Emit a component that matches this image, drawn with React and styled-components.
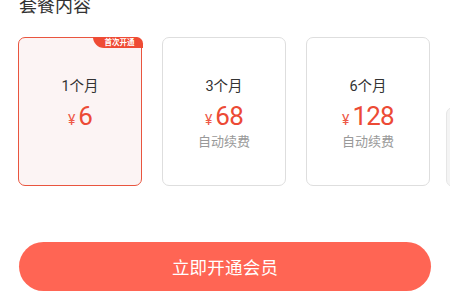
import React from 'react';
import styled, { createGlobalStyle } from 'styled-components';

const GlobalStyle = createGlobalStyle`
  html, body {
    margin: 0;
    padding: 0;
    background: #fff;
    font-family: Roboto, "Noto Sans CJK SC", sans-serif;
  }
`;

const Page = styled.div`
  width: 450px;
  height: 303px;
  overflow: hidden;
  display: flex;
  flex-direction: column;
  box-sizing: border-box;
`;

const Title = styled.h3`
  margin: -6px 0 0 19px;
  font-size: 18px;
  line-height: 24px;
  font-weight: 400;
  color: #333;
`;

const Plans = styled.div`
  display: flex;
  gap: 20px;
  margin-top: 19px;
  padding-left: 18px;
  overflow: hidden;
`;

const Card = styled.div`
  position: relative;
  flex: 0 0 124px;
  height: 149px;
  box-sizing: border-box;
  border-radius: 7px;
  border: ${p => (p.$active ? '1.5px solid #e9553f' : '1.5px solid #dedede')};
  background: ${p => (p.$active ? '#fcf4f4' : '#fff')};
  display: flex;
  flex-direction: column;
  align-items: center;
  padding-top: 39px;
`;

const PeekCard = styled.div`
  flex: 0 0 40px;
  height: 80px;
  margin-top: 70px;
  margin-left: -4px;
  box-sizing: border-box;
  border-radius: 7px;
  border: 1.5px solid #e6e6e6;
  background: #f4f4f4;
`;

const Badge = styled.span`
  position: absolute;
  top: -1.5px;
  right: -1.5px;
  width: 50px;
  height: 11px;
  background: #ef4b34;
  border-radius: 0 7px 0 12px;
  color: #fff;
  font-size: 7.5px;
  line-height: 11px;
  font-weight: 700;
  text-align: right;
  padding-right: 8px;
  box-sizing: border-box;
  white-space: nowrap;
`;

const Months = styled.div`
  font-size: 14.5px;
  line-height: 20px;
  color: #333;
`;

const Price = styled.div`
  margin-top: 4px;
  display: flex;
  align-items: baseline;
  color: #ec4a35;
  line-height: 30px;
`;

const Yen = styled.span`
  font-size: 14px;
  margin-right: 3px;
  color: #ee5a47;
`;

const Amount = styled.span`
  font-size: 26px;
  letter-spacing: -0.8px;
`;

const Renew = styled.div`
  margin-top: -2px;
  font-size: 13px;
  line-height: 18px;
  color: #999;
`;

const Footer = styled.div`
  margin-top: 55px;
  padding: 0 19px;
`;

const BuyButton = styled.button`
  width: 100%;
  height: 49px;
  border: none;
  border-radius: 25px;
  background: #ff6554;
  color: #fff;
  font-family: inherit;
  font-size: 17.5px;
  letter-spacing: 0.2px;
`;

const plans = [
  { months: '1个月', price: '6', badge: '首次开通', active: true },
  { months: '3个月', price: '68', renew: true },
  { months: '6个月', price: '128', renew: true },
];

export default function App() {
  return (
    <Page>
      <GlobalStyle />
      <Title>套餐内容</Title>
      <Plans>
        {plans.map(plan => (
          <Card key={plan.months} $active={plan.active}>
            {plan.badge && <Badge>{plan.badge}</Badge>}
            <Months>{plan.months}</Months>
            <Price>
              <Yen>¥</Yen>
              <Amount>{plan.price}</Amount>
            </Price>
            {plan.renew && <Renew>自动续费</Renew>}
          </Card>
        ))}
        <PeekCard />
      </Plans>
      <Footer>
        <BuyButton>立即开通会员</BuyButton>
      </Footer>
    </Page>
  );
}
